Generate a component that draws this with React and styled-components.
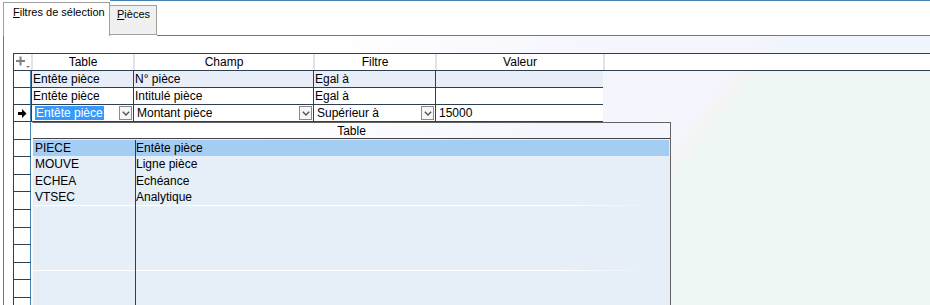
import React from 'react';
import styled, { createGlobalStyle } from 'styled-components';

const GlobalStyle = createGlobalStyle`
  html, body {
    margin: 0;
    padding: 0;
    height: 305px;
    overflow: hidden;
    background: #fff;
  }
  body {
    font-family: 'Liberation Sans', Arial, sans-serif;
    font-size: 12px;
    color: #000;
  }
  #root {
    height: 305px;
  }
`;

const DARK = '#2e3f50';
const BLUE = '#4682b4';

const bandA = `linear-gradient(128deg, #ffffff 0%, #ffffff 30%, #f5f6fd 55%, #f5f6fd 67%, #f3f5f9 68.5%, #eef5fd 70%, #eef5fd 100%) fixed`;
const bandB = `linear-gradient(128deg, #ffffff 0%, #ffffff 30%, #f5f6fd 55%, #f5f6fd 67%, #f4f4f4 68.5%, #eef6f4 70%, #eef6f4 100%) fixed`;

const Window = styled.div`
  height: 305px;
  display: flex;
  flex-direction: column;
  overflow: hidden;
`;

const TabBar = styled.div`
  display: flex;
  height: 36px;
  flex-shrink: 0;
  font-size: 11px;
`;

const ActiveTab = styled.div`
  flex-shrink: 0;
  margin: 2px 0 0 3px;
  width: 107px;
  height: 34px;
  box-sizing: border-box;
  border: 1px solid #a0a0a0;
  border-bottom: none;
  background: #fff;
  padding: 3px 0 0 9px;
  line-height: 13px;
  white-space: nowrap;
`;

const TabRest = styled.div`
  flex: 1;
  display: flex;
  align-items: flex-end;
  border-top: 1px solid ${BLUE};
`;

const Tab = styled.div`
  flex-shrink: 0;
  width: 47px;
  height: 30px;
  margin-bottom: 1px;
  box-sizing: border-box;
  border: 1px solid #a0a0a0;
  border-left: none;
  background: #f0f0f0;
  padding: 2px 0 0 7px;
  line-height: 13px;
`;

const TabFiller = styled.div`
  flex: 1;
  align-self: stretch;
  border-bottom: 1px solid ${BLUE};
`;

const Key = styled.span`
  text-decoration: underline;
`;

const Panel = styled.div`
  flex: 1;
  display: flex;
  flex-direction: column;
  margin-left: 3px;
  border-left: 1px solid ${BLUE};
  min-height: 0;
  overflow: hidden;
`;

const TopBand = styled.div`
  height: 17px;
  flex-shrink: 0;
  background: ${bandA};
`;

const GridArea = styled.div`
  flex: 1;
  padding-left: 9px;
  background: ${bandB};
  min-height: 0;
  overflow: hidden;
`;

const Grid = styled.div`
  position: relative;
  display: flex;
  flex-direction: column;
  border-top: 1px solid ${DARK};
`;

const Header = styled.div`
  display: flex;
  height: 17px;
  box-sizing: border-box;
  background: #fff;
  border-bottom: 1px solid ${DARK};
`;

const HeadCorner = styled.div`
  width: 18px;
  box-sizing: border-box;
  border-left: 1px solid ${DARK};
  display: flex;
  align-items: center;
  padding-left: 1px;
`;

const HeadCell = styled.div`
  width: ${p => (p.$w ? `${p.$w}px` : 'auto')};
  flex: ${p => (p.$w ? 'none' : 1)};
  box-sizing: border-box;
  border-left: 2px solid #e3e3e3;
  text-align: center;
  line-height: 16px;
`;

const Row = styled.div`
  display: flex;
  height: ${p => p.$h}px;
  flex-shrink: 0;
`;

const RowHead = styled.div`
  width: 18px;
  box-sizing: border-box;
  border-left: 1px solid ${DARK};
  border-right: 1px solid ${BLUE};
  border-bottom: 1px solid ${DARK};
  background: #fff;
  display: flex;
  align-items: center;
  justify-content: center;
`;

const Cell = styled.div`
  width: ${p => p.$w}px;
  box-sizing: border-box;
  border-left: 1px solid ${DARK};
  border-bottom: 1px solid ${DARK};
  background: ${p => p.$bg};
  padding-left: ${p => p.$pad ?? 1}px;
  line-height: 16px;
  white-space: nowrap;
  overflow: hidden;
`;

const EditCell = styled(Cell)`
  display: flex;
  align-items: center;
  justify-content: space-between;
  padding: 0 1px 0 3px;
`;

const Selected = styled.span`
  background: #3399ff;
  color: #fff;
  padding: 0 1px;
  line-height: 14px;
`;

const ComboButton = styled.div`
  width: 13px;
  height: 14px;
  box-sizing: border-box;
  border: 1px solid #8a8a8a;
  background: #f6f6f6;
  display: flex;
  align-items: center;
  justify-content: center;
  flex-shrink: 0;
`;

const Popup = styled.div`
  position: absolute;
  left: 19px;
  top: 68px;
  width: 639px;
  height: 200px;
  box-sizing: border-box;
  border-top: 1px solid #646464;
  border-right: 1px solid #646464;
  border-left: 1px solid #fafafa;
  background: #e6eef7;
  display: flex;
  flex-direction: column;
  overflow: hidden;
`;

const PopupHead = styled.div`
  height: 16px;
  flex-shrink: 0;
  box-sizing: border-box;
  border-bottom: 1px solid #444;
  background: ${bandB};
  text-align: center;
  line-height: 16px;
`;

const PopupBody = styled.div`
  flex: 1;
  display: flex;
  padding-top: 1px;
`;

const PopupCol = styled.div`
  width: ${p => (p.$w ? `${p.$w}px` : 'auto')};
  flex: ${p => (p.$w ? 'none' : 1)};
  border-right: ${p => (p.$w ? `1px solid ${DARK}` : 'none')};
  display: flex;
  flex-direction: column;
`;

const PopupRow = styled.div`
  height: 16.3px;
  flex-shrink: 0;
  line-height: 17px;
  padding-left: ${p => p.$pad}px;
  margin-right: ${p => (p.$last ? 1 : 0)}px;
  background: ${p => (p.$sel ? '#a4cdf4' : 'transparent')};
  white-space: nowrap;
`;

const Band = styled.div`
  height: 65px;
  flex-shrink: 0;
  background: ${p =>
    p.$fade
      ? 'linear-gradient(to right, #ffffff 0%, #ffffff 80%, rgba(255,255,255,0) 97%) top / 100% 1px no-repeat'
      : 'linear-gradient(#ffffff, #ffffff) top / 100% 1px no-repeat'};
`;

const PlusIcon = () => (
  <svg width="16" height="13" viewBox="0 0 16 13">
    <rect x="1" y="4" width="9" height="2" fill="#808080" />
    <rect x="4.5" y="0.5" width="2" height="9" fill="#808080" />
    <polygon points="11,10 15,10 13,12" fill="#808080" />
  </svg>
);

const RowArrow = () => (
  <svg width="9" height="9" viewBox="0 0 9 9">
    <polygon points="0,3 4,3 4,0 8.5,4.5 4,9 4,6 0,6" fill="#000" />
  </svg>
);

const Chevron = () => (
  <svg width="8" height="5" viewBox="0 0 8 5">
    <polyline points="0.8,0.8 4,4 7.2,0.8" fill="none" stroke="#555" strokeWidth="1.4" />
  </svg>
);

const columns = [
  { label: 'Table', w: 102 },
  { label: 'Champ', w: 180 },
  { label: 'Filtre', w: 122 },
  { label: 'Valeur', w: 168 },
];

const rows = [
  { bg: '#e7eef8', values: ['Entête pièce', 'N° pièce', 'Egal à', ''] },
  { bg: '#ffffff', values: ['Entête pièce', 'Intitulé pièce', 'Egal à', ''] },
];

const tables = [
  ['PIECE', 'Entête pièce'],
  ['MOUVE', 'Ligne pièce'],
  ['ECHEA', 'Echéance'],
  ['VTSEC', 'Analytique'],
];

const App = () => (
  <>
    <GlobalStyle />
    <Window>
      <TabBar>
        <ActiveTab><Key>F</Key>iltres de sélection</ActiveTab>
        <TabRest>
          <Tab><Key>P</Key>ièces</Tab>
          <TabFiller />
        </TabRest>
      </TabBar>

      <Panel>
        <TopBand />
        <GridArea>
          <Grid>
            <Header>
              <HeadCorner><PlusIcon /></HeadCorner>
              {columns.map(c => <HeadCell key={c.label} $w={c.w}>{c.label}</HeadCell>)}
              <HeadCell />
            </Header>

            {rows.map((r, i) => (
              <Row key={i} $h={17}>
                <RowHead />
                {r.values.map((v, j) => (
                  <Cell key={j} $w={columns[j].w} $bg={r.bg}>{v}</Cell>
                ))}
              </Row>
            ))}

            <Row $h={17}>
              <RowHead><RowArrow /></RowHead>
              <EditCell $w={102} $bg="#fff">
                <Selected>Entête pièce</Selected>
                <ComboButton><Chevron /></ComboButton>
              </EditCell>
              <EditCell $w={180} $bg="#fff">
                <span>Montant pièce</span>
                <ComboButton><Chevron /></ComboButton>
              </EditCell>
              <EditCell $w={122} $bg="#fff">
                <span>Supérieur à</span>
                <ComboButton><Chevron /></ComboButton>
              </EditCell>
              <Cell $w={168} $bg="#fff" $pad={3}>15000</Cell>
            </Row>

            {Array.from({ length: 11 }).map((_, i) => (
              <Row key={`e${i}`} $h={17.6}>
                <RowHead />
              </Row>
            ))}

            <Popup>
              <PopupHead>Table</PopupHead>
              <PopupBody>
                <PopupCol $w={102}>
                  {tables.map((t, i) => (
                    <PopupRow key={t[0]} $pad={2} $sel={i === 0}>{t[0]}</PopupRow>
                  ))}
                  <Band />
                  <Band />
                </PopupCol>
                <PopupCol>
                  {tables.map((t, i) => (
                    <PopupRow key={t[0]} $pad={0} $sel={i === 0} $last>{t[1]}</PopupRow>
                  ))}
                  <Band $fade />
                  <Band $fade />
                </PopupCol>
              </PopupBody>
            </Popup>
          </Grid>
        </GridArea>
      </Panel>
    </Window>
  </>
);

export default App;
